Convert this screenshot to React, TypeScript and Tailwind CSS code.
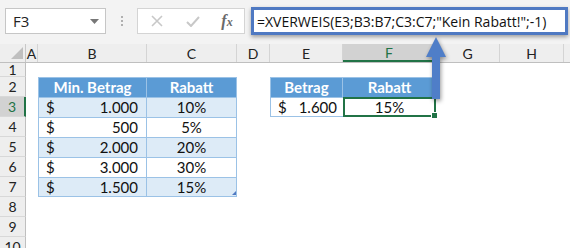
import React from "react";

const cols = [
  { k: "A", w: 12 },
  { k: "B", w: 109 },
  { k: "C", w: 90 },
  { k: "D", w: 33 },
  { k: "E", w: 73 },
  { k: "F", w: 93 },
  { k: "G", w: 64 },
  { k: "H", w: 64 },
];

const t1 = [
  ["1.000", "10%"],
  ["500", "5%"],
  ["2.000", "20%"],
  ["3.000", "30%"],
  ["1.500", "15%"],
];

function RowHead({ n, h, sel }: { n: number; h: number; sel?: boolean }) {
  return (
    <div
      className={`w-[26px] shrink-0 flex items-center justify-center border-b border-[#d8d8d8] border-r ${
        sel ? "bg-[#d2d2d2] border-r-2 border-r-[#217346] text-[#217346]" : "bg-[#eeeeee] border-r-[#bfbfbf] text-[#222]"
      } text-[14px]`}
      style={{ height: h }}
    >
      {n}
    </div>
  );
}

export default function App() {
  const font = { fontFamily: "Lato, 'Open Sans', sans-serif" };
  return (
    <div className="w-[570px] h-[248px] overflow-hidden bg-white relative" style={font}>
      {/* toolbar */}
      <div className="h-[44px] bg-[#f3f3f3] flex items-start pt-[8px] pl-[5px]">
        <div className="w-[101px] h-[26px] bg-white border border-[#c6c6c6] flex items-center justify-between pl-[7px] pr-[6px] text-[15px] text-[#222]" style={{ fontFamily: "'Open Sans', sans-serif" }}>
          <span>F3</span>
          <svg width="9" height="5" viewBox="0 0 9 5"><path d="M0 0h9L4.5 5z" fill="#777" /></svg>
        </div>
        <div className="w-[31px] h-[26px] flex flex-col items-center justify-center gap-[2px]">
          <span className="w-[2px] h-[2px] bg-[#b0b0b0]" />
          <span className="w-[2px] h-[2px] bg-[#b0b0b0]" />
          <span className="w-[2px] h-[2px] bg-[#b0b0b0]" />
        </div>
        <div className="w-[108px] h-[26px] bg-white border border-[#d4d4d4] flex items-center">
          <div className="w-[38px] flex justify-center">
            <svg width="12" height="12" viewBox="0 0 12 12"><path d="M1 1L11 11M11 1L1 11" stroke="#c8c8c8" strokeWidth="1.6" /></svg>
          </div>
          <div className="w-[34px] flex justify-center">
            <svg width="14" height="11" viewBox="0 0 14 11"><path d="M1 6l4 4L13 1" stroke="#c8c8c8" strokeWidth="2" fill="none" /></svg>
          </div>
          <div className="w-[34px] flex justify-center items-baseline text-[#6a6a6a] italic leading-none" style={{ fontFamily: "'Liberation Serif', serif" }}>
            <span className="text-[16px] font-bold">f</span><span className="text-[12px] font-bold">x</span>
          </div>
        </div>
        <div className="ml-[6px] -mt-[1px] w-[317px] h-[28px] bg-white border-[3px] border-[#4f79c2] shadow-[0_2px_4px_rgba(0,0,0,0.35)] flex items-center pl-[3px] text-[14px] text-[#111]" style={{ fontFamily: "'Open Sans', sans-serif" }}>
          =XVERWEIS(E3;B3:B7;C3:C7;"Kein Rabatt!";-1)
        </div>
      </div>

      {/* column header */}
      <div className="flex h-[19px] bg-[#eeeeee] border-b border-[#bfbfbf] text-[14px] text-[#222]">
        <div className="w-[26px] shrink-0 border-r border-[#c8c8c8] relative">
          <svg className="absolute right-[2px] bottom-[3px]" width="12" height="12" viewBox="0 0 12 12"><path d="M12 0V12H0z" fill="#bfbfbf" /></svg>
        </div>
        {cols.map((c) => (
          <div
            key={c.k}
            className={`shrink-0 flex items-center justify-center border-r border-[#d4d4d4] ${
              c.k === "F" ? "bg-[#d2d2d2] text-[#217346] border-b-2 border-b-[#217346]" : ""
            }`}
            style={{ width: c.w }}
          >
            {c.k}
          </div>
        ))}
        <div className="flex-1" />
      </div>

      {/* rows */}
      <div className="flex flex-col">
        <div className="flex">
          <RowHead n={1} h={14} />
        </div>
        <div className="flex">
          <RowHead n={2} h={20} />
          <div className="w-[12px]" />
          <div className="flex bg-[#5b9bd5] text-white font-bold text-[15px] h-[20px] border-t border-[#9bc2e6]">
            <div className="w-[109px] flex items-center justify-center border-l border-[#9bc2e6] border-r border-r-[#9bc2e6]">Min. Betrag</div>
            <div className="w-[90px] flex items-center justify-center border-r border-[#9bc2e6]">Rabatt</div>
          </div>
          <div className="w-[33px]" />
          <div className="flex bg-[#5b9bd5] text-white font-bold text-[15px] h-[20px] border-t border-[#9bc2e6]">
            <div className="w-[73px] flex items-center justify-center border-l border-[#9bc2e6] border-r border-r-[#9bc2e6]">Betrag</div>
            <div className="w-[93px] flex items-center justify-center">Rabatt</div>
          </div>
        </div>
        {t1.map((r, i) => (
          <div className="flex" key={i}>
            <RowHead n={i + 3} h={20} sel={i === 0} />
            <div className="w-[12px]" />
            <div className={`flex h-[20px] text-[15px] text-[#111] border-t border-[#9bc2e6] ${i === 4 ? "border-b" : ""} ${i % 2 === 0 ? "bg-[#ddebf7]" : "bg-white"} relative`}>
              <div className="w-[109px] flex items-center justify-between pl-[7px] pr-[8px] border-l border-[#9bc2e6] border-r border-r-[#9bc2e6]">
                <span>$</span>
                <span>{r[0]}</span>
              </div>
              <div className="w-[90px] flex items-center justify-center border-r border-[#9bc2e6]">{r[1]}</div>
              {i === 4 && <span className="absolute right-[1px] bottom-[1px] w-0 h-0 border-l-[4px] border-l-transparent border-b-[4px] border-b-[#4f79c2]" />}
            </div>
            {i === 0 && (
              <>
                <div className="w-[33px]" />
                <div className="flex h-[20px] text-[15px] text-[#111]">
                  <div className="w-[73px] flex items-center justify-between pl-[7px] pr-[6px] border border-[#9bc2e6] border-r-0">
                    <span>$</span>
                    <span>1.600</span>
                  </div>
                  <div className="w-[93px] flex items-center justify-center border-2 border-[#217346] relative">
                    15%
                    <span className="absolute -right-[4px] -bottom-[4px] w-[5px] h-[5px] bg-[#217346] border border-white box-content" />
                  </div>
                </div>
              </>
            )}
          </div>
        ))}
        {[8, 9, 10].map((n) => (
          <div className="flex" key={n}>
            <RowHead n={n} h={20} />
          </div>
        ))}
      </div>

      {/* arrow */}
      <svg className="absolute left-[420px] top-[35px]" width="32" height="70" viewBox="0 0 32 70" style={{ filter: "drop-shadow(1px 2px 2px rgba(0,0,0,0.4))" }}>
        <path d="M16 2 L26 22 L20 22 L20 64 L12 64 L12 22 L6 22 Z" fill="#4f7ec8" />
      </svg>
    </div>
  );
}
